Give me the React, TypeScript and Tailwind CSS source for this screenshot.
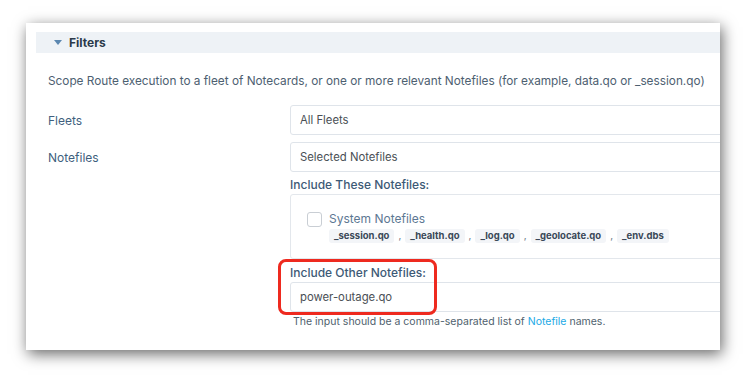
const chips = ["_session.qo", "_health.qo", "_log.qo", "_geolocate.qo", "_env.dbs"];

const FieldBox = ({ value }: { value: string }) => (
  <div className="flex h-[30px] w-[520px] shrink-0 items-center rounded-[3px] border border-[#dfe4ea] bg-white pl-[9px] text-[11.3px] text-[#4a4f55]">
    {value}
  </div>
);

export default function App() {
  return (
    <div
      className="h-[379px] w-[748px] overflow-hidden bg-white pl-[26px] pt-[23px]"
      style={{ fontFamily: "Inter, 'Noto Sans', sans-serif" }}
    >
      <div className="relative h-[327px] w-[694px] overflow-hidden bg-white shadow-[2px_4px_14px_rgba(0,0,0,0.6)]">
        {/* section header */}
        <div className="ml-[10px] mt-[9px] flex h-[21px] items-center bg-[#eef2f6] pl-[18px]">
          <svg width="8" height="5" viewBox="0 0 8 5" className="mr-[7px]">
            <path d="M0 0h8L4 5z" fill="#5b87b0" />
          </svg>
          <span className="text-[12px] font-bold text-[#2b3a4a]">Filters</span>
        </div>

        <p className="ml-[22px] mt-[20px] whitespace-nowrap text-[11.8px] leading-[16px] text-[#4d6071]">
          Scope Route execution to a fleet of Notecards, or one or more relevant Notefiles (for example, data.qo or _session.qo)
        </p>

        <div className="mt-[16px] flex items-center">
          <div className="w-[264px] shrink-0 pl-[22px] pt-[2px] text-[12px] text-[#3f5f7e]">Fleets</div>
          <FieldBox value="All Fleets" />
        </div>

        <div className="mt-[7px] flex items-start">
          <div className="flex h-[30px] w-[264px] shrink-0 items-center pl-[22px] pt-[2px] text-[12px] text-[#3f5f7e]">Notefiles</div>
          <div className="flex w-[520px] shrink-0 flex-col">
            <FieldBox value="Selected Notefiles" />

            <div className="mt-[5px] text-[12px] font-medium leading-[16px] text-[#3d5a76]">Include These Notefiles:</div>
            <div className="mt-[1px] h-[65px] w-[520px] rounded-[3px] border border-[#e3e7ec] pl-[16px] pt-[16px]">
              <div className="flex items-start gap-[7px]">
                <div className="mt-[1px] h-[15px] w-[15px] shrink-0 rounded-[3px] border border-[#c9ced4] bg-white" />
                <div className="flex flex-col">
                  <span className="text-[12px] leading-[16px] text-[#5d7893]">System Notefiles</span>
                  <div className="mt-[1px] flex items-center">
                    {chips.map((c, i) => (
                      <div key={c} className="flex items-center">
                        {i > 0 && <span className="px-[4px] text-[10px] text-[#6b7785]">,</span>}
                        <span className="rounded-[3px] bg-[#f3f5f8] px-[5px] py-[1px] text-[9.5px] font-bold leading-[12px] text-[#3a4857]">
                          {c}
                        </span>
                      </div>
                    ))}
                  </div>
                </div>
              </div>
            </div>

            <div className="mt-[6px] text-[12px] font-medium leading-[16px] text-[#3d5a76]">Include Other Notefiles:</div>
            <div className="mt-[1px]">
              <FieldBox value="power-outage.qo" />
            </div>
            <p className="ml-[3px] mt-[3px] text-[10.5px] leading-[14px] text-[#4f5f6e]">
              The input should be a comma-separated list of <span className="text-[#1aa9e6]">Notefile</span> names.
            </p>
          </div>
        </div>

        {/* annotation highlight */}
        <div className="absolute left-[252px] top-[236px] h-[56px] w-[159px] rounded-[8px] border-[3px] border-[#ee2a1f]" />
      </div>
    </div>
  );
}
